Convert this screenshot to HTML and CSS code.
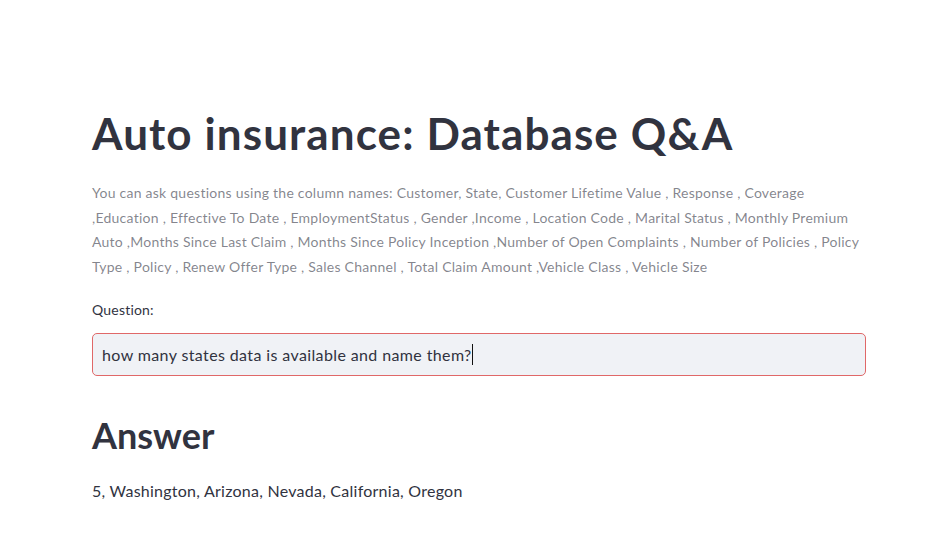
FILE: index.html
```html
<!DOCTYPE html>
<html>
<head>
<meta charset="utf-8">
<title>Auto insurance: Database Q&amp;A</title>
<link rel="stylesheet" href="styles.css">
</head>
<body>
<main class="main">
  <h1 class="title">Auto insurance: Database Q&amp;A</h1>
  <p class="caption">You can ask questions using the column names: Customer, State, Customer Lifetime Value , Response , Coverage<br>,Education , Effective To Date , EmploymentStatus , Gender ,Income , Location Code , Marital Status , Monthly Premium<br>Auto ,Months Since Last Claim , Months Since Policy Inception ,Number of Open Complaints , Number of Policies , Policy<br>Type , Policy , Renew Offer Type , Sales Channel , Total Claim Amount ,Vehicle Class , Vehicle Size</p>
  <label class="label">Question:</label>
  <div class="input"><span class="input-text">how many states data is available and name them?</span><span class="caret"></span></div>
  <h2 class="answer-title">Answer</h2>
  <p class="answer">5, Washington, Arizona, Nevada, California, Oregon</p>
</main>
</body>
</html>
```
FILE: styles.css
```css
html, body {
  margin: 0;
  padding: 0;
  background: #ffffff;
}
body {
  font-family: "Lato", "Noto Sans", sans-serif;
  color: rgb(49, 51, 63);
}
.main {
  width: 774px;
  margin-left: 92px;
  padding-top: 107px;
  display: flex;
  flex-direction: column;
  align-items: stretch;
}
.title {
  margin: 0;
  font-size: 44px;
  line-height: 53px;
  font-weight: 700;
  letter-spacing: 1.1px;
  color: rgb(49, 51, 63);
  white-space: nowrap;
}
.caption {
  margin: 21px 0 0;
  font-size: 14px;
  line-height: 24.67px;
  letter-spacing: 0.25px;
  color: rgba(49, 51, 63, 0.6);
  white-space: nowrap;
}
.label {
  display: block;
  margin-top: 20.7px;
  font-size: 14px;
  line-height: 20px;
  letter-spacing: 0.2px;
  color: rgb(49, 51, 63);
}
.input {
  margin-top: 12.4px;
  border: 1px solid #e06868;
  border-radius: 5px;
  background: #f0f2f6;
  padding: 2px 9px 0;
  box-sizing: content-box;
  height: 39px;
  display: flex;
  align-items: flex-start;
}
.input-text {
  font-size: 16px;
  line-height: 38px;
  letter-spacing: 0.38px;
  color: rgb(49, 51, 63);
  white-space: nowrap;
}
.caret {
  width: 1px;
  height: 21px;
  margin-top: 8px;
  background: #111111;
}
.answer-title {
  margin: 38.6px 0 0;
  font-size: 36px;
  line-height: 43px;
  font-weight: 700;
  letter-spacing: 0;
  color: rgb(49, 51, 63);
}
.answer {
  margin: 21.2px 0 0;
  font-size: 16px;
  line-height: 24px;
  letter-spacing: 0.25px;
  color: rgb(49, 51, 63);
}
```
